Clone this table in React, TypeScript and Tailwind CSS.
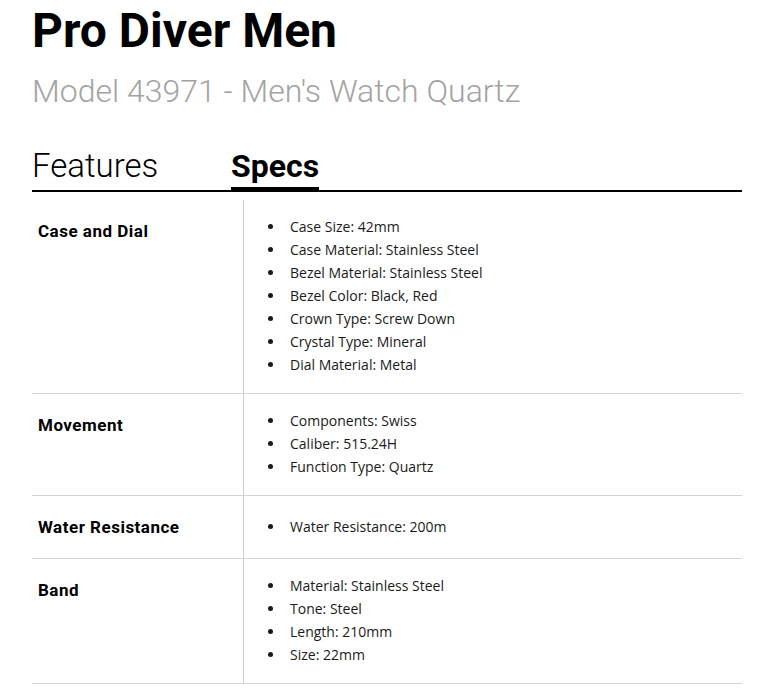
const specs: { label: string; items: string[] }[] = [
  {
    label: "Case and Dial",
    items: [
      "Case Size: 42mm",
      "Case Material: Stainless Steel",
      "Bezel Material: Stainless Steel",
      "Bezel Color: Black, Red",
      "Crown Type: Screw Down",
      "Crystal Type: Mineral",
      "Dial Material: Metal",
    ],
  },
  {
    label: "Movement",
    items: ["Components: Swiss", "Caliber: 515.24H", "Function Type: Quartz"],
  },
  {
    label: "Water Resistance",
    items: ["Water Resistance: 200m"],
  },
  {
    label: "Band",
    items: ["Material: Stainless Steel", "Tone: Steel", "Length: 210mm", "Size: 22mm"],
  },
];

export default function App() {
  return (
    <div className="min-h-[694px] w-[768px] bg-white pl-8 pr-[26px] pt-[3px] font-['Roboto',sans-serif]">
      {/* Title */}
      <h1 className="text-[48px] font-bold leading-[56px] text-black">Pro Diver Men</h1>
      <p className="mt-[13px] text-[32px] font-light leading-[38px] text-[#a3a3a3]">
        Model 43971 - Men's Watch Quartz
      </p>

      {/* Tabs */}
      <div className="mt-[36px] flex items-end border-b-2 border-black">
        <button className="w-[199px] pb-[4px] text-left text-[33px] font-light leading-[40px] text-black">
          Features
        </button>
        <button className="-mb-[2px] border-b-[5px] border-black pb-[1px] text-[32px] font-bold leading-[40px] text-black">
          Specs
        </button>
      </div>

      {/* Specs table */}
      <div className="mt-[8px]">
        {specs.map((row) => (
          <div key={row.label} className="grid min-h-[63px] grid-cols-[212px_1fr] border-b border-[#d4d4d4]">
            <div className="border-r border-[#cfcfcf] pl-[6px] pt-[21px] text-[17px] font-bold leading-[20px] tracking-[0.5px] text-black">
              {row.label}
            </div>
            <ul className="self-center pb-[17px] pl-[24px] pt-[15px] font-['Open_Sans',sans-serif] text-[14px] leading-[23px] text-[#1a1a1a]">
              {row.items.map((item) => (
                <li key={item} className="flex items-center">
                  <span className="flex w-[22px]">
                    <span className="h-[5px] w-[5px] rounded-full bg-[#1a1a1a]" />
                  </span>
                  <span>{item}</span>
                </li>
              ))}
            </ul>
          </div>
        ))}
      </div>
    </div>
  );
}
